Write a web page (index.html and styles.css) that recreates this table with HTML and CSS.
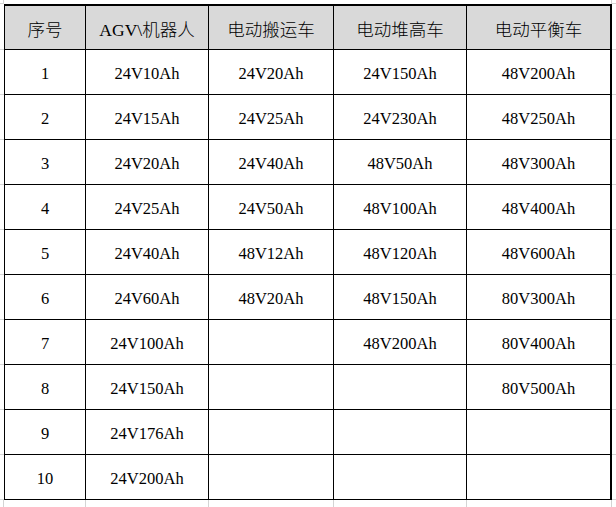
FILE: index.html
```html
<!DOCTYPE html>
<html lang="zh">
<head>
<meta charset="utf-8">
<title>电池规格表</title>
<link rel="stylesheet" href="styles.css">
</head>
<body>
<div class="sheet">
  <div class="edge edge-tl"></div><div class="edge"></div><div class="edge"></div><div class="edge"></div><div class="edge"></div><div class="edge edge-tc"></div><div class="edge edge-tr"></div>

  <div class="edge edge-side"></div>
  <div class="cell head first">序号</div>
  <div class="cell head">AGV\机器人</div>
  <div class="cell head">电动搬运车</div>
  <div class="cell head">电动堆高车</div>
  <div class="cell head last">电动平衡车</div>
  <div class="edge edge-side"></div>

  <div class="edge edge-side"></div><div class="cell first">1</div><div class="cell">24V10Ah</div><div class="cell">24V20Ah</div><div class="cell">24V150Ah</div><div class="cell last">48V200Ah</div><div class="edge edge-side"></div>
  <div class="edge edge-side"></div><div class="cell first">2</div><div class="cell">24V15Ah</div><div class="cell">24V25Ah</div><div class="cell">24V230Ah</div><div class="cell last">48V250Ah</div><div class="edge edge-side"></div>
  <div class="edge edge-side"></div><div class="cell first">3</div><div class="cell">24V20Ah</div><div class="cell">24V40Ah</div><div class="cell">48V50Ah</div><div class="cell last">48V300Ah</div><div class="edge edge-side"></div>
  <div class="edge edge-side"></div><div class="cell first">4</div><div class="cell">24V25Ah</div><div class="cell">24V50Ah</div><div class="cell">48V100Ah</div><div class="cell last">48V400Ah</div><div class="edge edge-side"></div>
  <div class="edge edge-side"></div><div class="cell first">5</div><div class="cell">24V40Ah</div><div class="cell">48V12Ah</div><div class="cell">48V120Ah</div><div class="cell last">48V600Ah</div><div class="edge edge-side"></div>
  <div class="edge edge-side"></div><div class="cell first">6</div><div class="cell">24V60Ah</div><div class="cell">48V20Ah</div><div class="cell">48V150Ah</div><div class="cell last">80V300Ah</div><div class="edge edge-side"></div>
  <div class="edge edge-side"></div><div class="cell first">7</div><div class="cell">24V100Ah</div><div class="cell"></div><div class="cell">48V200Ah</div><div class="cell last">80V400Ah</div><div class="edge edge-side"></div>
  <div class="edge edge-side"></div><div class="cell first">8</div><div class="cell">24V150Ah</div><div class="cell"></div><div class="cell"></div><div class="cell last">80V500Ah</div><div class="edge edge-side"></div>
  <div class="edge edge-side"></div><div class="cell first">9</div><div class="cell">24V176Ah</div><div class="cell"></div><div class="cell"></div><div class="cell last"></div><div class="edge edge-side"></div>
  <div class="edge edge-side"></div><div class="cell first">10</div><div class="cell">24V200Ah</div><div class="cell"></div><div class="cell"></div><div class="cell last"></div><div class="edge edge-side"></div>

  <div class="edge edge-bottom"></div><div class="edge edge-bottom"></div><div class="edge edge-bottom"></div><div class="edge edge-bottom"></div><div class="edge edge-bottom"></div><div class="edge edge-bottom"></div><div class="edge"></div>
</div>
</body>
</html>
```

FILE: styles.css
```css
html, body {
  margin: 0;
  padding: 0;
  background: #ffffff;
}

body {
  width: 616px;
  height: 507px;
  overflow: hidden;
  font-family: "Liberation Serif", "Noto Sans CJK SC", serif;
  color: #000000;
}

.sheet {
  display: grid;
  grid-template-columns: 4px 82px 123px 125px 133px 145px 1fr;
  grid-template-rows: 4px 46px repeat(10, 45px) 1fr;
  width: 616px;
  height: 507px;
}

.edge {
  box-sizing: border-box;
}

.edge-tl {
  border-right: 1px solid #d4d4d4;
  border-bottom: 1px solid #d4d4d4;
}

.edge-tc {
  border-right: 1px solid #d4d4d4;
}

.edge-tr {
  border-bottom: 1px solid #d4d4d4;
}

.edge-side {
  border-bottom: 1px solid #d4d4d4;
}

.edge-bottom {
  border-right: 1px solid #d4d4d4;
}

.cell {
  box-sizing: border-box;
  display: flex;
  align-items: center;
  justify-content: center;
  padding-top: 3px;
  border-right: 1px solid #000000;
  border-bottom: 1px solid #000000;
  font-size: 16.5px;
  white-space: nowrap;
  background: #ffffff;
}

.cell.first {
  border-left: 1px solid #000000;
}

.cell.last {
  border-right: 2px solid #000000;
}

.cell.head {
  border-top: 2px solid #000000;
  background: #d9d9d9;
  font-size: 17.5px;
  font-weight: 300;
  padding-top: 1px;
}
```
